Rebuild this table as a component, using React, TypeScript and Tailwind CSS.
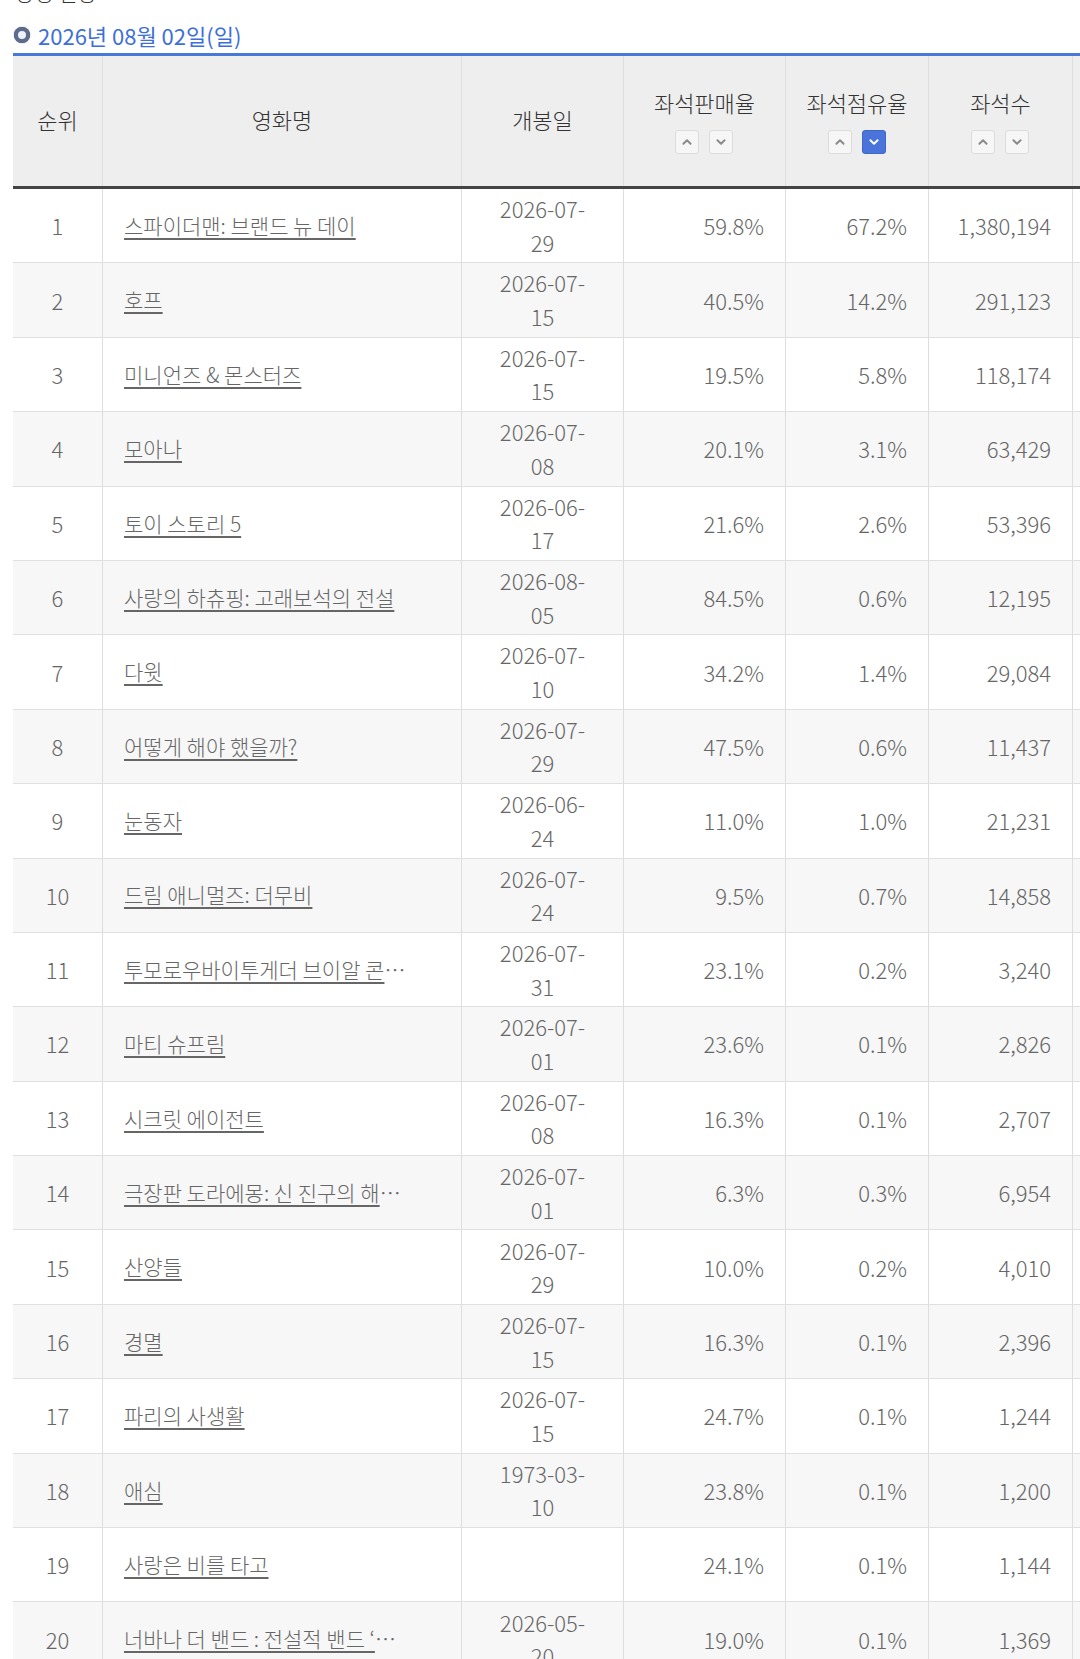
type Row = {
  rank: number;
  title: string;
  cut?: boolean;
  d1: string;
  d2: string;
  sale: string;
  share: string;
  seats: string;
};

const rows: Row[] = [
  { rank: 1, title: "스파이더맨: 브랜드 뉴 데이", d1: "2026-07-", d2: "29", sale: "59.8%", share: "67.2%", seats: "1,380,194" },
  { rank: 2, title: "호프", d1: "2026-07-", d2: "15", sale: "40.5%", share: "14.2%", seats: "291,123" },
  { rank: 3, title: "미니언즈 & 몬스터즈", d1: "2026-07-", d2: "15", sale: "19.5%", share: "5.8%", seats: "118,174" },
  { rank: 4, title: "모아나", d1: "2026-07-", d2: "08", sale: "20.1%", share: "3.1%", seats: "63,429" },
  { rank: 5, title: "토이 스토리 5", d1: "2026-06-", d2: "17", sale: "21.6%", share: "2.6%", seats: "53,396" },
  { rank: 6, title: "사랑의 하츄핑: 고래보석의 전설", d1: "2026-08-", d2: "05", sale: "84.5%", share: "0.6%", seats: "12,195" },
  { rank: 7, title: "다윗", d1: "2026-07-", d2: "10", sale: "34.2%", share: "1.4%", seats: "29,084" },
  { rank: 8, title: "어떻게 해야 했을까?", d1: "2026-07-", d2: "29", sale: "47.5%", share: "0.6%", seats: "11,437" },
  { rank: 9, title: "눈동자", d1: "2026-06-", d2: "24", sale: "11.0%", share: "1.0%", seats: "21,231" },
  { rank: 10, title: "드림 애니멀즈: 더무비", d1: "2026-07-", d2: "24", sale: "9.5%", share: "0.7%", seats: "14,858" },
  { rank: 11, title: "투모로우바이투게더 브이알 콘", cut: true, d1: "2026-07-", d2: "31", sale: "23.1%", share: "0.2%", seats: "3,240" },
  { rank: 12, title: "마티 슈프림", d1: "2026-07-", d2: "01", sale: "23.6%", share: "0.1%", seats: "2,826" },
  { rank: 13, title: "시크릿 에이전트", d1: "2026-07-", d2: "08", sale: "16.3%", share: "0.1%", seats: "2,707" },
  { rank: 14, title: "극장판 도라에몽: 신 진구의 해", cut: true, d1: "2026-07-", d2: "01", sale: "6.3%", share: "0.3%", seats: "6,954" },
  { rank: 15, title: "산양들", d1: "2026-07-", d2: "29", sale: "10.0%", share: "0.2%", seats: "4,010" },
  { rank: 16, title: "경멸", d1: "2026-07-", d2: "15", sale: "16.3%", share: "0.1%", seats: "2,396" },
  { rank: 17, title: "파리의 사생활", d1: "2026-07-", d2: "15", sale: "24.7%", share: "0.1%", seats: "1,244" },
  { rank: 18, title: "애심", d1: "1973-03-", d2: "10", sale: "23.8%", share: "0.1%", seats: "1,200" },
  { rank: 19, title: "사랑은 비를 타고", d1: "", d2: "", sale: "24.1%", share: "0.1%", seats: "1,144" },
  { rank: 20, title: "너바나 더 밴드 : 전설적 밴드 ‘", cut: true, d1: "2026-05-", d2: "20", sale: "19.0%", share: "0.1%", seats: "1,369" },
];

function Chevron({ up, active }: { up?: boolean; active?: boolean }) {
  return (
    <span
      className={
        active
          ? "flex h-[24px] w-[24px] items-center justify-center rounded-[3px] border border-[#3f67c9] bg-[#4a74da]"
          : "flex h-[24px] w-[24px] items-center justify-center rounded-[3px] border border-[#dcdcdc] bg-[#f6f6f6]"
      }
    >
      <svg width="12" height="12" viewBox="0 0 10 10" fill="none">
        <path
          d={up ? "M2 6.5 L5 3.5 L8 6.5" : "M2 3.5 L5 6.5 L8 3.5"}
          stroke={active ? "#ffffff" : "#8a8a8a"}
          strokeWidth="1.6"
          strokeLinecap="round"
          strokeLinejoin="round"
        />
      </svg>
    </span>
  );
}

function SortHead({ label, active }: { label: string; active?: boolean }) {
  return (
    <div className="-mt-[2px] flex flex-col items-center">
      <span className="leading-[30px]">{label}</span>
      <div className="mt-[13px] flex gap-[10px]">
        <Chevron up />
        <Chevron active={active} />
      </div>
    </div>
  );
}

const cell = "flex h-full items-center border-r border-[#dedede]";

export default function App() {
  return (
    <div
      className="w-[1080px] overflow-hidden bg-white text-[22px] font-light text-[#666]"
      style={{ fontFamily: '"Noto Sans CJK KR", "Noto Sans", sans-serif' }}
    >
      <div className="h-[10px] overflow-hidden pl-[15px]">
        <div className="-mt-[22px] text-[21px] leading-[28px] text-[#333]">상영 현황</div>
      </div>
      <div className="flex h-[43px] items-start pl-[14px] pt-[11px]">
        <div className="flex items-center gap-[8px] leading-[28px]">
          <span className="h-[16px] w-[16px] rounded-full border-[4px] border-[#5d6b8c] bg-[#eef1f7] shadow-[0_0_1px_#23324f]" />
          <span className="text-[22px] font-normal text-[#3d6fd9]">2026년 08월 02일(일)</span>
        </div>
      </div>
      <div className="ml-[13px] w-[1240px] border-t-[3px] border-[#4a78d6]">
        <div className="flex h-[133px] border-b-[3px] border-[#444] bg-[#eeeeee] text-[#333]">
          <div className={`${cell} w-[90px] justify-center pb-[4px]`}>순위</div>
          <div className={`${cell} w-[359px] justify-center pb-[4px]`}>영화명</div>
          <div className={`${cell} w-[162px] justify-center pb-[4px]`}>개봉일</div>
          <div className={`${cell} w-[162px] justify-center`}>
            <SortHead label="좌석판매율" />
          </div>
          <div className={`${cell} w-[143px] justify-center`}>
            <SortHead label="좌석점유율" active />
          </div>
          <div className={`${cell} w-[144px] justify-center`}>
            <SortHead label="좌석수" />
          </div>
          <div className={`${cell} flex-1`} />
        </div>
        {rows.map((r, i) => (
          <div
            key={r.rank}
            className={
              i % 2 === 0
                ? "flex h-[74.4px] border-b border-[#e0e0e0] bg-white"
                : "flex h-[74.4px] border-b border-[#e0e0e0] bg-[#f7f7f7]"
            }
          >
            <div className={`${cell} w-[90px] justify-center`}>{r.rank}</div>
            <div className={`${cell} w-[359px] pl-[21px] text-[21px]`}>
              <span className="whitespace-nowrap">
                <span className="underline decoration-[1.5px] underline-offset-[4px]">{r.title}</span>
                {r.cut && <span className="tracking-[-2px]">…</span>}
              </span>
            </div>
            <div className={`${cell} w-[162px] justify-center`}>
              <div className="flex flex-col items-center leading-[33.6px]">
                <span>{r.d1}</span>
                <span>{r.d2}</span>
              </div>
            </div>
            <div className={`${cell} w-[162px] justify-end pr-[21px]`}>{r.sale}</div>
            <div className={`${cell} w-[143px] justify-end pr-[21px]`}>{r.share}</div>
            <div className={`${cell} w-[144px] justify-end pr-[21px]`}>{r.seats}</div>
            <div className={`${cell} flex-1`} />
          </div>
        ))}
      </div>
    </div>
  );
}
